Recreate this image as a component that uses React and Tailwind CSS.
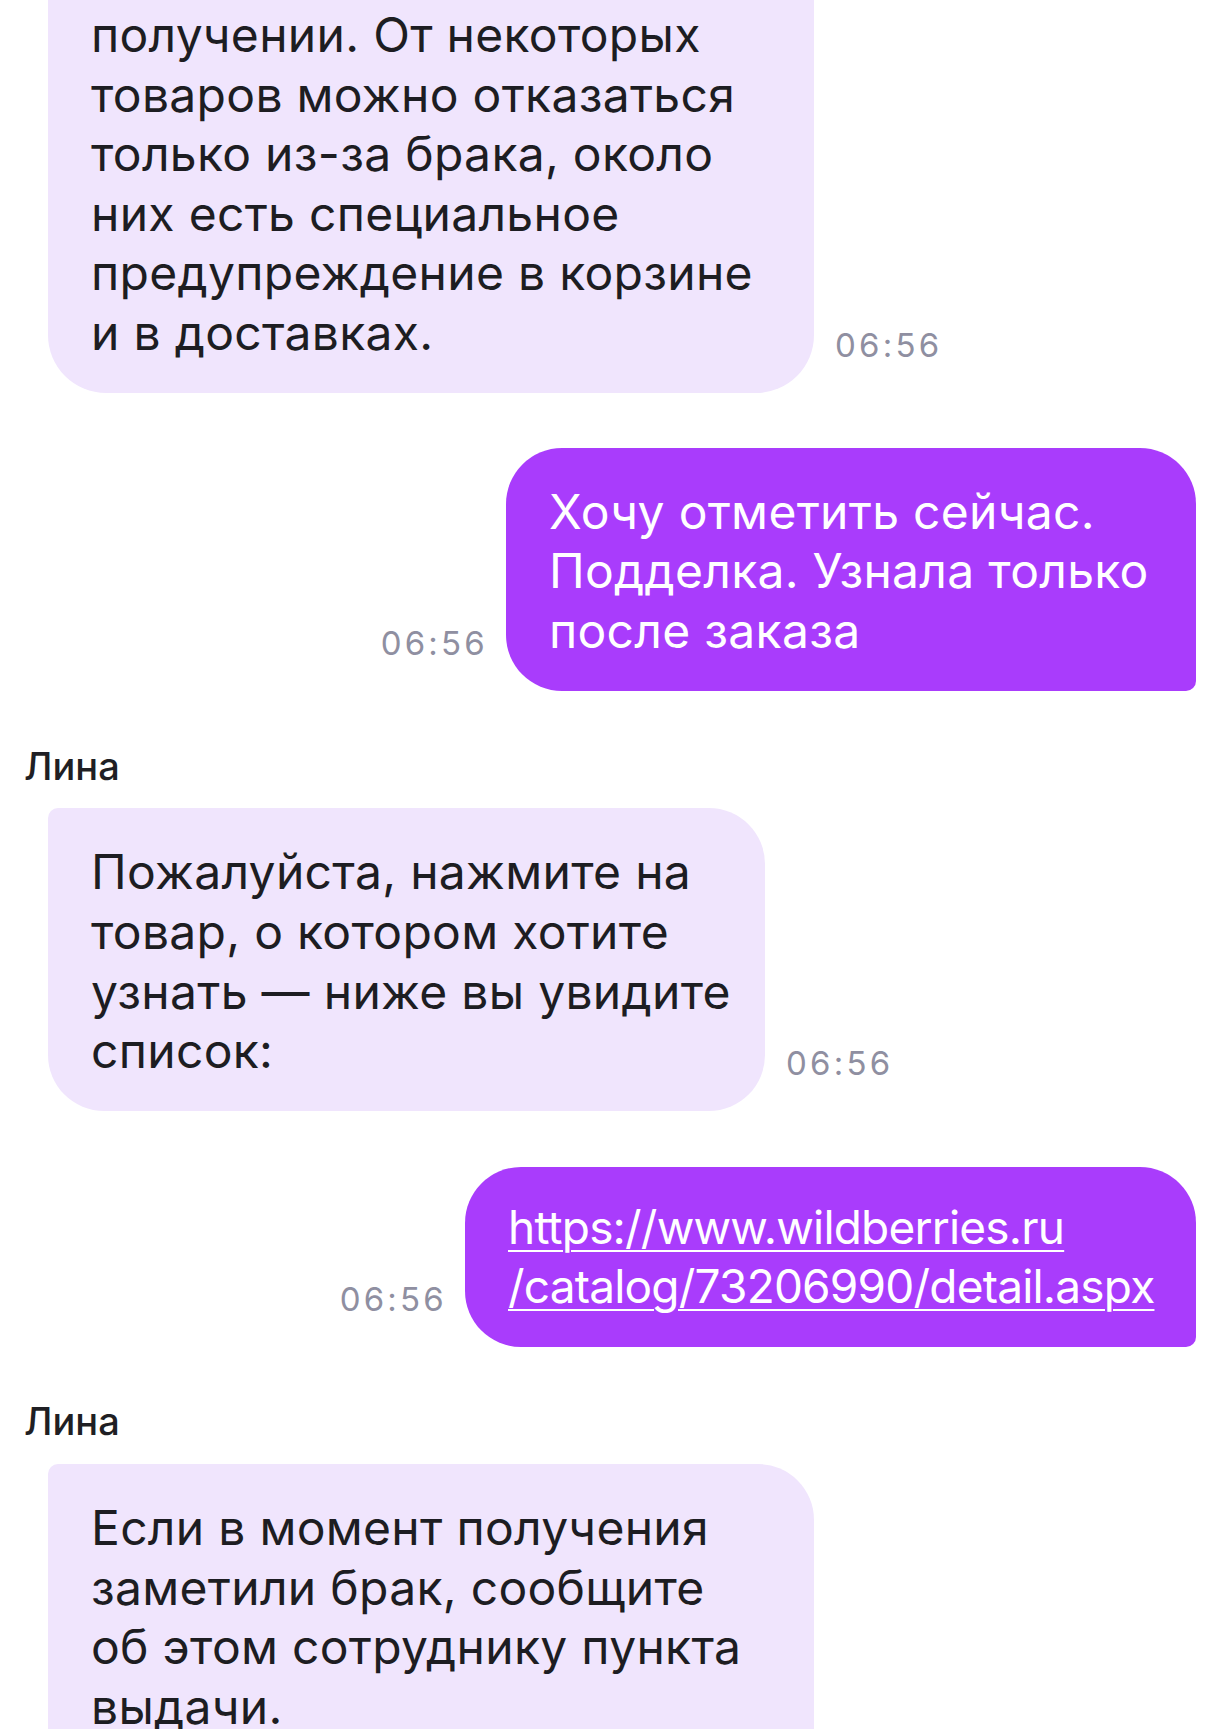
const Time = ({ className = "" }) => (
  <span className={`mb-[29px] shrink-0 text-[33px] leading-[38px] tracking-[3.2px] text-[#8f8fa1] ${className}`}>
    06:56
  </span>
);

function Incoming({ lines, className = "", rounded = "rounded-[56px] rounded-tl-[10px]" }) {
  return (
    <div className="flex items-end gap-[21px] pl-[24px]">
      <div className={`w-[766px] bg-[#f0e5fd] pl-[43px] pr-[40px] text-[48px] leading-[59.6px] tracking-[0.3px] text-[#1d1d22] ${rounded} ${className}`}>
        {lines.map((l, i) => (
          <div key={i} className="whitespace-nowrap">{l}</div>
        ))}
      </div>
      <Time />
    </div>
  );
}

function Outgoing({ lines, className = "", link = false }) {
  return (
    <div className="flex items-end justify-end gap-[18px]">
      <Time />
      <div
        className={`rounded-[56px] rounded-br-[10px] bg-[#a93cfc] pl-[43px] pr-[42px] leading-[59.6px] text-white ${
          link ? "text-[46px] tracking-[-0.8px]" : "text-[48px] tracking-[0.3px]"
        } ${className}`}
      >
        {lines.map((l, i) => (
          <div key={i} className={`whitespace-nowrap ${link ? "underline decoration-[2px] underline-offset-[6px]" : ""}`}>
            {l}
          </div>
        ))}
      </div>
    </div>
  );
}

const Name = ({ className = "" }) => (
  <div className={`text-[38px] font-medium leading-[44px] text-[#1f1f24] ${className}`}>Лина</div>
);

export default function App() {
  return (
    <div className="h-[1729px] w-[1217px] overflow-hidden bg-white font-['Inter',sans-serif]">
      <div className="flex flex-col pl-[24px] pr-[21px]">
        <Incoming
          rounded="rounded-b-[58px]"
          className="pt-[5px] pb-[30px]"
          lines={[
            "получении. От некоторых",
            "товаров можно отказаться",
            "только из-за брака, около",
            "них есть специальное",
            "предупреждение в корзине",
            "и в доставках.",
          ]}
        />

        <div className="mt-[55px]">
          <Outgoing
            className="w-[690px] pt-[34px] pb-[31px]"
            lines={["Хочу отметить сейчас.", "Подделка. Узнала только", "после заказа"]}
          />
        </div>

        <Name className="mt-[53px]" />
        <div className="mt-[20px]">
          <Incoming
            className="!w-[717px] pt-[34px] pb-[30px]"
            lines={[
              "Пожалуйста, нажмите на",
              "товар, о котором хотите",
              "узнать — ниже вы увидите",
              "список:",
            ]}
          />
        </div>

        <div className="mt-[56px]">
          <Outgoing
            link
            className="w-[731px] pt-[31px] pb-[30px]"
            lines={["https://www.wildberries.ru", "/catalog/73206990/detail.aspx"]}
          />
        </div>

        <Name className="mt-[52px]" />
        <div className="mt-[21px]">
          <Incoming
            className="pt-[34px] pb-[90px]"
            lines={[
              "Если в момент получения",
              "заметили брак, сообщите",
              "об этом сотруднику пункта",
              "выдачи.",
            ]}
          />
        </div>
      </div>
    </div>
  );
}
